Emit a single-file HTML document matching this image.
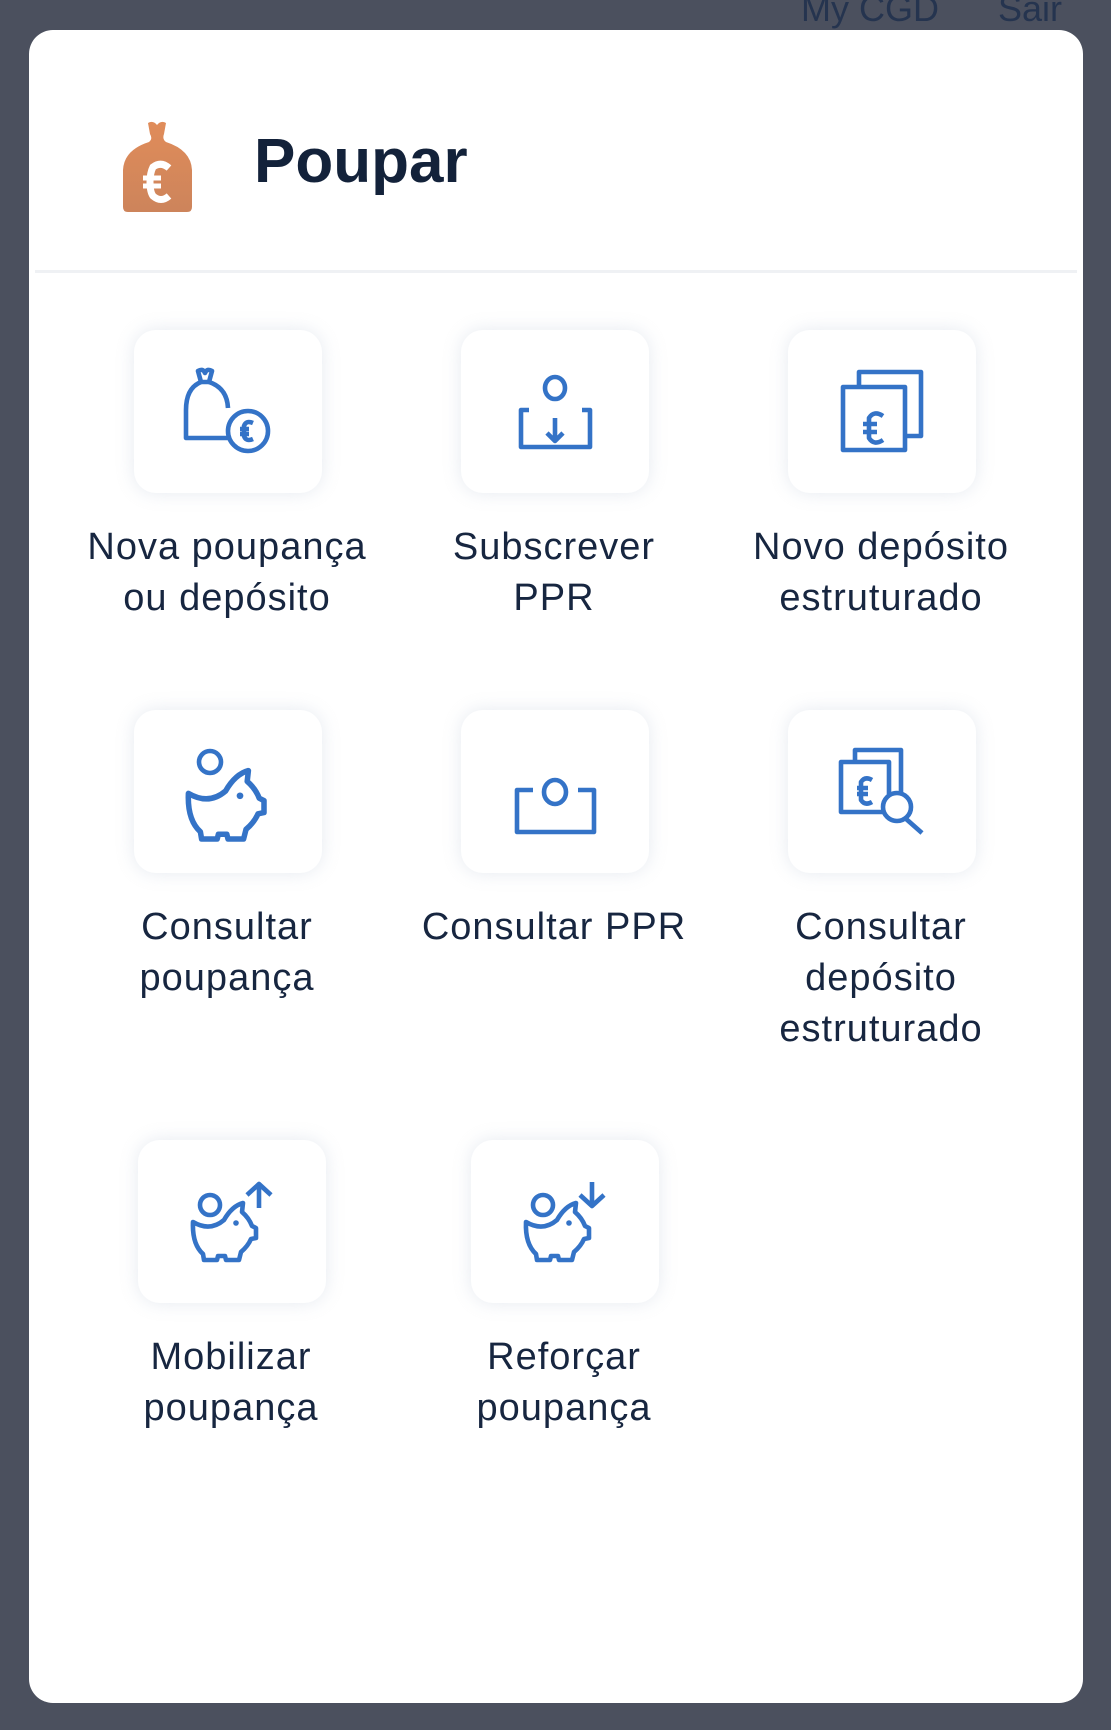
<!DOCTYPE html>
<html><head><meta charset="utf-8">
<style>
*{margin:0;padding:0;box-sizing:border-box}
body{width:1111px;height:1730px;background:#4b505e;position:relative;overflow:hidden;font-family:"Liberation Sans",sans-serif}
.top{position:absolute;top:-12px;font-size:36px;color:#25344f}
.modal{position:absolute;left:29px;top:30px;width:1054px;height:1673px;background:#fff;border-radius:24px;overflow:hidden}
.div{position:absolute;left:6px;right:6px;top:240px;height:3px;background:#eff1f4}
.title{position:absolute;left:225px;top:96px;font-size:62px;font-weight:bold;color:#13223a;letter-spacing:0px}
.tile{position:absolute;width:188px;height:163px;background:#fff;border-radius:22px;box-shadow:0 0 18px rgba(200,208,222,.45)}
.tile svg{position:absolute;left:0;top:0;width:188px;height:163px}
.lab{position:absolute;width:340px;text-align:center;font-size:38px;line-height:51px;color:#172640;letter-spacing:1px}
svg .s{fill:none;stroke:#3473c7;stroke-width:4.6;stroke-linejoin:round}
</style></head><body>
<div class="top" style="left:801px">My CGD</div>
<div class="top" style="left:998px">Sair</div>
<div class="modal">
 <svg style="position:absolute;left:92px;top:90px" width="75" height="95" viewBox="0 0 75 95">
  <defs><linearGradient id="g" x1="0" y1="0" x2="0" y2="1"><stop offset="0" stop-color="#e08c5a"/><stop offset="1" stop-color="#cd845b"/></linearGradient></defs>
  <path d="M27 3 Q32 0 36 5 Q40 0 45 3 L43 14 Q41 19 45 22 Q70 30 71 50 L71 87 Q71 92 66 92 L7 92 Q2 92 2 87 L2 50 Q3 30 28 22 Q32 19 29 14 Z" fill="url(#g)"/>
  <path d="M48 48 Q40 41 32 47 Q29 53 29 62 Q29 72 32 76 Q40 83 48 76" fill="none" stroke="#fff" stroke-width="7"/>
  <path d="M22 58 L40 58 M22 66 L40 66" stroke="#fff" stroke-width="5"/>
 </svg>
 <div class="title">Poupar</div>
 <div class="div"></div>
</div>

<!-- Row 1 -->
<div class="tile" style="left:134px;top:330px"><svg viewBox="0 0 188 163">
 <path class="s" d="M64 41 Q69 38 71 43 Q73 38 78 41 L75 52 L67 52 Z"/>
 <path class="s" d="M67 52 Q52 58 52 80 L52 108 L96 108 M75 52 Q93 58 94 78"/>
 <circle class="s" cx="114" cy="101" r="20"/>
 <path class="s" stroke-width="3.4" d="M119 93 Q112 90 110 96 L110 106 Q112 112 119 109 M106 99 L115 99 M106 104 L115 104"/>
</svg></div>
<div class="tile" style="left:461px;top:330px"><svg viewBox="0 0 188 163">
 <ellipse class="s" cx="94" cy="58" rx="10" ry="11"/>
 <path class="s" d="M68 80 L60 80 L60 117 L129 117 L129 80 L121 80"/>
 <path class="s" d="M94 88 L94 111 M86 103 L94 111 L102 103"/>
</svg></div>
<div class="tile" style="left:788px;top:330px"><svg viewBox="0 0 188 163">
 <path class="s" d="M71 57 L71 42 L133 42 L133 106 L117 106"/>
 <rect class="s" x="55" y="57" width="62" height="63"/>
 <path class="s" stroke-width="5" d="M95 86 Q86 80 81 88 L81 108 Q86 116 95 110 M75 94 L89 94 M75 102 L89 102"/>
</svg></div>
<div class="lab" style="left:57px;top:522px">Nova poupança<br>ou depósito</div>
<div class="lab" style="left:384px;top:522px">Subscrever<br>PPR</div>
<div class="lab" style="left:711px;top:522px">Novo depósito<br>estruturado</div>

<!-- Row 2 -->
<div class="tile" style="left:134px;top:710px"><svg viewBox="0 0 188 163">
 <circle class="s" cx="76" cy="52" r="11"/>
 <g transform="translate(-11.6,-15) scale(1.2)"><path class="s" stroke-width="3.8" d="M55,82 Q72,92 86,80 Q94,66 105,63 L104,72 Q111,78 114,86 L118,88 L118,98 L113,99 Q110,106 103,112 L101,120 L88,120 L87,116 L80,116 L79,120 L66,120 L65,114 Q54,104 55,82 Z"/>
 <circle cx="98" cy="84" r="2.8" fill="#3473c7"/></g>
</svg></div>
<div class="tile" style="left:461px;top:710px"><svg viewBox="0 0 188 163">
 <ellipse class="s" cx="94" cy="82" rx="11" ry="12"/>
 <path class="s" d="M72 80 L56 80 L56 122 L133 122 L133 80 L117 80"/>
</svg></div>
<div class="tile" style="left:788px;top:710px"><svg viewBox="0 0 188 163">
 <path class="s" d="M67 52 L67 40 L113 40 L113 84"/>
 <path class="s" d="M96 102 L53 102 L53 52 L101 52 L101 86"/>
 <path class="s" stroke-width="4.4" d="M84 70 Q77 66 73 72 L73 90 Q77 96 84 92 M69 78 L80 78 M69 84 L80 84"/>
 <circle class="s" cx="109" cy="97" r="14"/>
 <path class="s" d="M117 108 L134 123"/>
</svg></div>
<div class="lab" style="left:57px;top:902px">Consultar<br>poupança</div>
<div class="lab" style="left:384px;top:902px">Consultar PPR</div>
<div class="lab" style="left:711px;top:902px">Consultar<br>depósito<br>estruturado</div>

<!-- Row 3 -->
<div class="tile" style="left:138px;top:1140px"><svg viewBox="0 0 188 163">
 <circle class="s" cx="72" cy="65" r="10"/>
 <path class="s" d="M55,82 Q72,92 86,80 Q94,66 105,63 L104,72 Q111,78 114,86 L118,88 L118,98 L113,99 Q110,106 103,112 L101,120 L88,120 L87,116 L80,116 L79,120 L66,120 L65,114 Q54,104 55,82 Z"/>
 <circle cx="98" cy="83" r="2.8" fill="#3473c7"/>
 <path class="s" d="M121 68 L121 45 M109 55 L121 44 L133 55"/>
</svg></div>
<div class="tile" style="left:471px;top:1140px"><svg viewBox="0 0 188 163">
 <circle class="s" cx="72" cy="65" r="10"/>
 <path class="s" d="M55,82 Q72,92 86,80 Q94,66 105,63 L104,72 Q111,78 114,86 L118,88 L118,98 L113,99 Q110,106 103,112 L101,120 L88,120 L87,116 L80,116 L79,120 L66,120 L65,114 Q54,104 55,82 Z"/>
 <circle cx="98" cy="83" r="2.8" fill="#3473c7"/>
 <path class="s" d="M121 42 L121 65 M109 55 L121 66 L133 55"/>
</svg></div>
<div class="lab" style="left:61px;top:1332px">Mobilizar<br>poupança</div>
<div class="lab" style="left:394px;top:1332px">Reforçar<br>poupança</div>
</body></html>
